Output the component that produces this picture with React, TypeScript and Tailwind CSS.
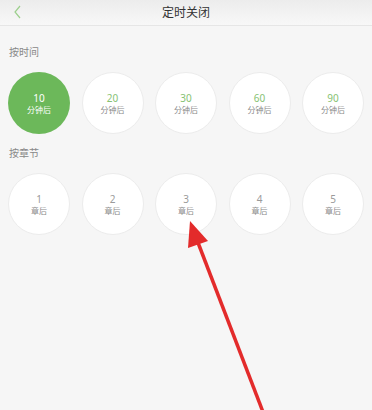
import React from 'react';

const font = { fontFamily: '"Noto Sans", "Noto Sans CJK SC", sans-serif' };

interface OptionProps {
  value: string;
  unit: string;
  active?: boolean;
  grey?: boolean;
}

const Option: React.FC<OptionProps> = ({ value, unit, active, grey }) => {
  let numCls = 'text-[10px] leading-[12px] text-[#86c273]';
  if (active) numCls = 'text-[10px] leading-[12px] text-white';
  else if (grey) numCls = 'text-[10px] leading-[12px] text-[#9a9a9a]';

  return (
    <div
      className={
        active
          ? 'w-[62px] h-[62px] rounded-full bg-[#6cb85a] flex flex-col items-center justify-center shrink-0'
          : 'w-[62px] h-[62px] rounded-full bg-white border border-[#ececec] flex flex-col items-center justify-center shrink-0'
      }
    >
      <span className={numCls}>{value}</span>
      <span className={active ? 'text-[8px] leading-[11px] text-white' : 'text-[8px] leading-[11px] text-[#8a8a8a]'}>
        {unit}
      </span>
    </div>
  );
};

export default function App() {
  const minutes = ['10', '20', '30', '60', '90'];
  const chapters = ['1', '2', '3', '4', '5'];

  return (
    <div className="relative w-[372px] h-[410px] bg-[#f6f6f6] overflow-hidden" style={font}>
      <div className="h-[26px] flex items-center justify-center relative bg-gradient-to-b from-[#ececec] to-[#f8f8f8] border-b border-[#e6e6e6]">
        <svg className="absolute left-[13px] top-[5px]" width="10" height="14" viewBox="0 0 10 14">
          <path d="M7 1 L2 7 L7 13" fill="none" stroke="#9ccf8c" strokeWidth="1.2" />
        </svg>
        <span className="text-[12px] text-[#333]">定时关闭</span>
      </div>

      <div className="px-[8px]">
        <div className="text-[10px] text-[#888] mt-[19px] ml-[1px]">按时间</div>
        <div className="flex justify-between mt-[12px]">
          {minutes.map((m, i) => (
            <Option key={m} value={m} unit="分钟后" active={i === 0} />
          ))}
        </div>

        <div className="text-[10px] text-[#888] mt-[12px] ml-[1px]">按章节</div>
        <div className="flex justify-between mt-[12px]">
          {chapters.map((c) => (
            <Option key={c} value={c} unit="章后" grey />
          ))}
        </div>
      </div>

      <svg className="absolute left-0 top-0 pointer-events-none" width="372" height="410" viewBox="0 0 372 410">
        <line x1="263" y1="412" x2="197" y2="240" stroke="#e32b2b" strokeWidth="3.5" />
        <polygon points="190,221 188,248 208,241" fill="#e32b2b" />
      </svg>
    </div>
  );
}
